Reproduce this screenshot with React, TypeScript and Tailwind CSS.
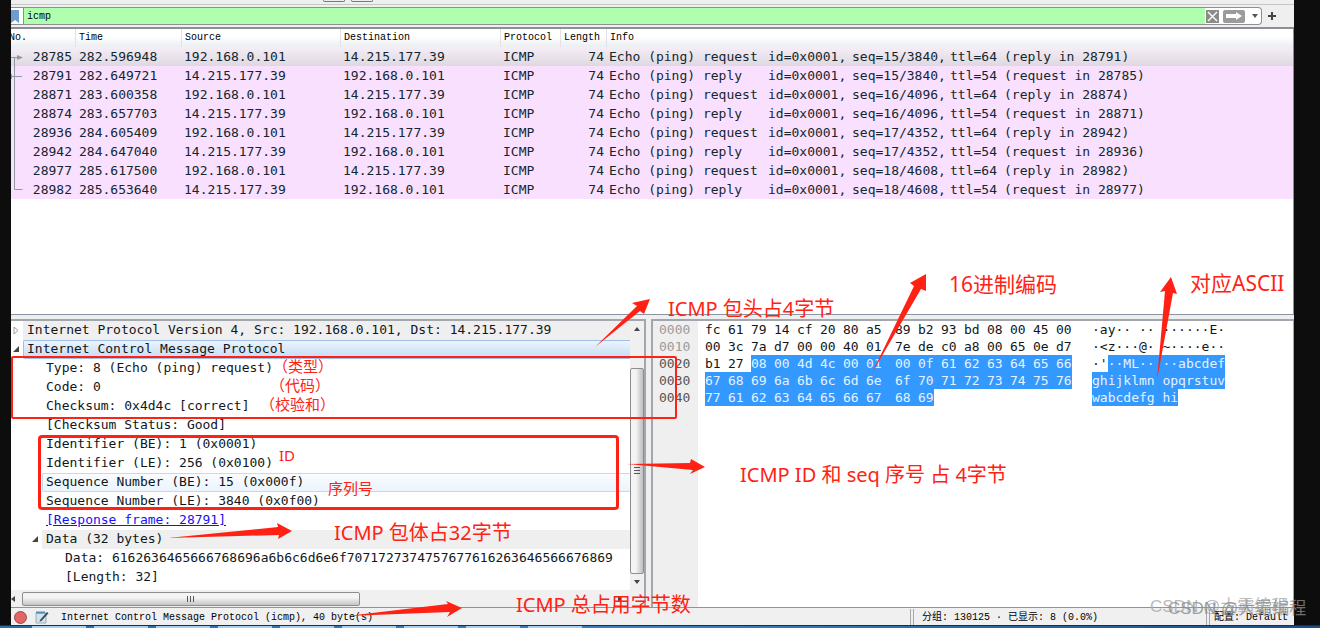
import { ReactNode } from "react";

type Packet = {
    no: number,
    time: string,
    source: string,
    destination: string,
    kind: string,
    seq: string,
    ttl: number,
    peer: string,
};

type HexRow = {
    offset: string,
    bytes: string[],
    ascii: string,
    from: number,
};

const HOST = "192.168.0.101";
const REMOTE = "14.215.177.39";

const packets: Packet[] = [
    { no: 28785, time: "282.596948", source: HOST, destination: REMOTE, kind: "request", seq: "15/3840", ttl: 64, peer: "(reply in 28791)" },
    { no: 28791, time: "282.649721", source: REMOTE, destination: HOST, kind: "reply", seq: "15/3840", ttl: 54, peer: "(request in 28785)" },
    { no: 28871, time: "283.600358", source: HOST, destination: REMOTE, kind: "request", seq: "16/4096", ttl: 64, peer: "(reply in 28874)" },
    { no: 28874, time: "283.657703", source: REMOTE, destination: HOST, kind: "reply", seq: "16/4096", ttl: 54, peer: "(request in 28871)" },
    { no: 28936, time: "284.605409", source: HOST, destination: REMOTE, kind: "request", seq: "17/4352", ttl: 64, peer: "(reply in 28942)" },
    { no: 28942, time: "284.647040", source: REMOTE, destination: HOST, kind: "reply", seq: "17/4352", ttl: 54, peer: "(request in 28936)" },
    { no: 28977, time: "285.617500", source: HOST, destination: REMOTE, kind: "request", seq: "18/4608", ttl: 64, peer: "(reply in 28982)" },
    { no: 28982, time: "285.653640", source: REMOTE, destination: HOST, kind: "reply", seq: "18/4608", ttl: 54, peer: "(request in 28977)" },
];

// from = index of the first byte that belongs to the ICMP layer
const hexRows: HexRow[] = [
    { offset: "0000", bytes: "fc 61 79 14 cf 20 80 a5 89 b2 93 bd 08 00 45 00".split(" "), ascii: "·ay·· ········E·", from: 16 },
    { offset: "0010", bytes: "00 3c 7a d7 00 00 40 01 7e de c0 a8 00 65 0e d7".split(" "), ascii: "·<z···@·~····e··", from: 16 },
    { offset: "0020", bytes: "b1 27 08 00 4d 4c 00 01 00 0f 61 62 63 64 65 66".split(" "), ascii: "·'··ML····abcdef", from: 2 },
    { offset: "0030", bytes: "67 68 69 6a 6b 6c 6d 6e 6f 70 71 72 73 74 75 76".split(" "), ascii: "ghijklmnopqrstuv", from: 0 },
    { offset: "0040", bytes: "77 61 62 63 64 65 66 67 68 69".split(" "), ascii: "wabcdefghi", from: 0 },
];

const arrows = [
    "595,347 637,306 632,303 650,299 644,314 640,311",
    "872,373 914,286 910,283 926,274 926,291 921,289",
    "1157,380 1165,291 1160,292 1171,277 1177,294 1173,293",
    "627,464 690,463 691,459 705,467 690,474 693,470",
    "168,538 278,527 277,523 292,531 278,539 279,535",
    "347,616 448,604 446,601 462,608 447,617 450,612",
];

function FilterBar() {
    return (
        <form className="flex h-[22px] items-center bg-[#efefef] pr-[18px]">
            <div className="flex h-[18px] flex-1 items-stretch rounded-r border border-[#8e8e8e] border-l-0 bg-white">
                <button type="button" aria-label="Bookmarks" className="w-[13px] border-r border-[#8e8e8e] bg-white">
                    <svg width="8" height="14" viewBox="0 0 8 14">
                        <path d="M0 1h8v13l-4-3-4 3z" fill="#6f9bd0" />
                    </svg>
                </button>
                <input
                    aria-label="Display filter"
                    defaultValue="icmp"
                    className="min-w-0 flex-1 bg-[#afffaf] pl-[3px] font-['Liberation_Mono',monospace] text-[10px] text-black outline-none"
                />
                <div className="flex items-center gap-1 pl-px">
                    <button type="button" aria-label="Clear" className="flex size-[13px] items-center justify-center bg-[#8b8b8b]">
                        <svg width="11" height="11" viewBox="0 0 11 11" stroke="#fff" strokeWidth="1.4"><path d="M1 1l9 9M10 1l-9 9" /></svg>
                    </button>
                    <button type="button" aria-label="Apply" className="flex h-[13px] w-[22px] items-center justify-center rounded-xs bg-[#9b9b9b]">
                        <svg width="16" height="8" viewBox="0 0 16 8"><path d="M0 2h10V0l6 4-6 4V6H0z" fill="#fff" /></svg>
                    </button>
                    <button type="button" aria-label="Recent filters" className="flex w-3 justify-center">
                        <svg width="6" height="4" viewBox="0 0 6 4"><path d="M0 0h6L3 4z" fill="#555" /></svg>
                    </button>
                </div>
            </div>
            <button type="button" aria-label="Add filter button" className="ml-[6px]">
                <svg width="8" height="8" viewBox="0 0 8 8" stroke="#444" strokeWidth="2"><path d="M4 0v8M0 4h8" /></svg>
            </button>
        </form>
    );
}

function PacketList() {
    return (
        <section className="relative flex-1 overflow-hidden border-t-2 border-r border-[#8c9096] bg-white">
            <table className="w-full table-fixed border-collapse whitespace-nowrap">
                <colgroup>
                    <col className="w-16" />
                    <col className="w-[106px]" />
                    <col className="w-[159px]" />
                    <col className="w-40" />
                    <col className="w-[60px]" />
                    <col className="w-[46px]" />
                    <col />
                </colgroup>
                <thead>
                    <tr className="h-[18px] bg-linear-to-b from-white from-40% to-[#eceef1] text-left font-['Liberation_Mono',monospace] text-[10px] leading-[18px] text-black *:p-0 *:font-normal">
                        <th><span className="-ml-0.5">No.</span></th>
                        {["Time", "Source", "Destination", "Protocol", "Length", "Info"].map((name) => (
                            <th key={name}><span className="block border-l border-[#e0e2e5] pl-[3px]">{name}</span></th>
                        ))}
                    </tr>
                </thead>
                <tbody className="text-[13px] leading-[19px] text-[#12272e]">
                    {packets.map((p, i) => (
                        <tr key={p.no} className={i === 0 ? "h-[19px] bg-linear-to-b from-[#f6eef6] to-[#ded8e0] *:p-0" : "h-[19px] bg-[#fae0ff] *:p-0"}>
                            <td><span className="block pr-[3px] text-right">{p.no}</span></td>
                            <td><span className="pl-1">{p.time}</span></td>
                            <td><span className="pl-[3px]">{p.source}</span></td>
                            <td><span className="pl-[3px]">{p.destination}</span></td>
                            <td><span className="pl-[3px]">ICMP</span></td>
                            <td><span className="block pr-[2px] text-right">74</span></td>
                            <td>
                                <div className="flex pl-[3px]">
                                    <span className="w-[159px]">Echo (ping) {p.kind}</span>
                                    <span className="w-[84px]">id=0x0001,</span>
                                    <span className="w-[98px]">seq={p.seq},</span>
                                    <span className="w-[54px]">ttl={p.ttl}</span>
                                    <span>{p.peer}</span>
                                </div>
                            </td>
                        </tr>
                    ))}
                </tbody>
            </table>
            {/* conversation marker next to the packet numbers */}
            <svg className="absolute top-[18px] left-0" width="14" height="152" viewBox="0 0 14 152" fill="none" stroke="#8f9aa0">
                <path d="M0 10.5h7M3.500 10.500v132h8M0 29.500h11M.5 27v5" />
                <path d="M6 8l6 2.500-6 2.500z" fill="#8f9aa0" stroke="none" />
            </svg>
        </section>
    );
}

function TreeRow({ children, level, tone, toggle }: { children: ReactNode, level: 0 | 1 | 2, tone?: string, toggle?: "open" | "closed" }) {
    const indent = ["pl-3", "pl-[31px]", "pl-[50px]"][level];
    return (
        <li className={`flex h-[19px] ${indent}`}>
            <div className="relative -ml-3 flex w-3 shrink-0 items-center">
                {toggle === "closed" && (
                    <svg width="7" height="9" viewBox="0 0 7 9" className="ml-0.5"><path d="M1 1v7l4-3.500z" fill="#fff" stroke="#a0a0a0" /></svg>
                )}
                {toggle === "open" && (
                    <svg width="7" height="7" viewBox="0 0 7 7" className="ml-0.5"><path d="M6 0v6H0z" fill="#444" /></svg>
                )}
            </div>
            <div className={`flex-1 ${tone ?? "pl-1 leading-[17px]"}`}>{children}</div>
        </li>
    );
}

function DetailTree() {
    return (
        <section className="flex w-[635px] shrink-0 flex-col border-t-2 border-r-2 border-[#a3a7ad] bg-[#efefef]">
            <div className="flex flex-1">
                <ul className="flex-1 bg-white pb-[3px] text-[13px] whitespace-nowrap text-[#12171a]">
                    <TreeRow level={0} toggle="closed" tone="bg-[#efefef] pl-1 leading-[17px]">Internet Protocol Version 4, Src: 192.168.0.101, Dst: 14.215.177.39</TreeRow>
                    <TreeRow level={0} toggle="open" tone="rounded-l-xs border border-r-0 border-[#9dbfe8] bg-linear-to-b from-[#ecf4fd] to-[#c5dbf7] pl-[3px] leading-[15px]">Internet Control Message Protocol</TreeRow>
                    <TreeRow level={1}>Type: 8 (Echo (ping) request)</TreeRow>
                    <TreeRow level={1}>Code: 0</TreeRow>
                    <TreeRow level={1}>Checksum: 0x4d4c [correct]</TreeRow>
                    <TreeRow level={1}>[Checksum Status: Good]</TreeRow>
                    <TreeRow level={1}>Identifier (BE): 1 (0x0001)</TreeRow>
                    <TreeRow level={1}>Identifier (LE): 256 (0x0100)</TreeRow>
                    <TreeRow level={1} tone="rounded-l-xs border border-r-0 border-[#bcdcf8] bg-linear-to-b from-[#fafcff] to-[#ebf4fd] pl-[3px] leading-[15px]">Sequence Number (BE): 15 (0x000f)</TreeRow>
                    <TreeRow level={1}>Sequence Number (LE): 3840 (0x0f00)</TreeRow>
                    <TreeRow level={1}><a href="#28791" className="text-[#1414f0] underline">[Response frame: 28791]</a></TreeRow>
                    <TreeRow level={1} toggle="open" tone="bg-[#efefef] pl-1 leading-[17px]">Data (32 bytes)</TreeRow>
                    <TreeRow level={2}>Data: 6162636465666768696a6b6c6d6e6f7071727374757677616263646566676869</TreeRow>
                    <TreeRow level={2}>[Length: 32]</TreeRow>
                </ul>
                <div className="flex w-[14px] flex-col items-center bg-[#f0f0f0]">
                    <svg width="6" height="4" viewBox="0 0 6 4" className="my-[6px]"><path d="M0 4h6L3 0z" fill="#444" /></svg>
                    <div className="h-[31px]" />
                    <div className="flex w-full flex-1 items-center justify-center rounded-xs border border-[#8e8e8e] bg-linear-to-r from-[#f4f4f4] from-40% to-[#bdbdc0]">
                        <svg width="6" height="8" viewBox="0 0 6 8" stroke="#555"><path d="M0 .5h6M0 3.500h6M0 6.500h6" /></svg>
                    </div>
                    <svg width="6" height="4" viewBox="0 0 6 4" className="my-[6px]"><path d="M0 0h6L3 4z" fill="#444" /></svg>
                </div>
            </div>
            <div className="flex h-[17px] items-center bg-[#f0f0f0] pr-[22px]">
                <svg width="4" height="6" viewBox="0 0 4 6"><path d="M4 0v6L0 3z" fill="#444" /></svg>
                <div className="ml-[7px] flex h-[14px] w-[338px] items-center justify-center rounded-xs border border-[#8e8e8e] bg-linear-to-b from-[#f4f4f4] from-40% to-[#c4c4c6]">
                    <svg width="8" height="6" viewBox="0 0 8 6" stroke="#555"><path d="M.5 0v6M3.500 0v6M6.500 0v6" /></svg>
                </div>
                <svg width="4" height="6" viewBox="0 0 4 6" className="ml-auto"><path d="M0 0v6l4-3z" fill="#444" /></svg>
            </div>
        </section>
    );
}

function HexDump() {
    return (
        <section className="ml-[5px] flex-1 border-t-2 border-r border-l-2 border-[#a3a7ad] bg-linear-to-r from-[#efefef] from-[45px] to-white to-[45px] text-[13px] whitespace-pre text-[#12171a]">
            {hexRows.map((row) => (
                <div key={row.offset} className="flex h-[17px] leading-[17px]">
                    <span className={row.from < 16 ? "w-[52px] shrink-0 pl-[6px] text-[#555]" : "w-[52px] shrink-0 pl-[6px] text-[#9c9c9c]"}>{row.offset}</span>
                    <div className="flex w-[387px] shrink-0">
                        {row.bytes.map((byte, i) => {
                            const last = i === row.bytes.length - 1;
                            const width = last ? "w-4" : i === 7 ? "w-[29px]" : "w-[23px]";
                            return <span key={i} className={`${width} ${i >= row.from ? "bg-[#3399ff] text-[#e6f2ff]" : ""}`}>{byte}</span>;
                        })}
                    </div>
                    <div className="flex">
                        <span>{row.ascii.slice(0, Math.min(row.from, 8))}</span>
                        <span className={row.from < 16 ? "bg-[#3399ff] text-[#e6f2ff]" : ""}>
                            {row.ascii.slice(Math.min(row.from, 8), 8)} {row.ascii.slice(8)}
                        </span>
                    </div>
                </div>
            ))}
        </section>
    );
}

function StatusBar() {
    return (
        <footer className="flex h-[18px] items-center border-t border-[#8a94a2] bg-[#f0f0f0] pt-px font-['Liberation_Mono','Noto_Sans_CJK_SC',monospace] text-[10px] leading-[14px] whitespace-pre text-black">
            <button type="button" aria-label="Expert information" className="ml-[3px] size-[13px] rounded-full border border-[#9c4a4a] bg-[#e26464]" />
            <button type="button" aria-label="Capture comments" className="ml-2">
                <svg width="14" height="14" viewBox="0 0 14 14">
                    <path d="M1 3h10v10H1z" fill="#cfe2ee" stroke="#9aaeba" />
                    <path d="M1 2.500h9" stroke="#4d8fb8" strokeWidth="2" />
                    <path d="M5 10l7-8 1.500 1.200-7 7.800-2 .6z" fill="#3f4a50" />
                </svg>
            </button>
            <span className="flex-1 pt-0.5 pl-3">Internet Control Message Protocol (icmp), 40 byte(s)</span>
            <span className="flex h-full w-[296px] items-center border-l border-[#a8a8a8]">
                <span className="h-full w-[3px] border-r border-[#a8a8a8]" />
                <span className="pt-0.5 pl-2">分组: 130125 · 已显示: 8 (0.0%)</span>
            </span>
            <span className="flex h-full w-[88px] items-center border-l border-[#a8a8a8]">
                <span className="h-full w-[3px] border-r border-[#a8a8a8]" />
                <span className="pt-0.5 pl-1">配置: Default</span>
            </span>
        </footer>
    );
}

function Annotations() {
    return (
        <div className="pointer-events-none absolute inset-0 overflow-hidden font-['Noto_Sans','Noto_Sans_CJK_SC',sans-serif] text-[15px] leading-5 whitespace-nowrap text-[#ff2214]">
            <div className="absolute top-[356px] left-[11px] h-[63px] w-[666px] rounded-xs border-2 border-current" />
            <div className="absolute top-[435px] left-[38px] h-[75px] w-[581px] rounded-sm border-[3px] border-current" />
            <svg className="absolute inset-0" width="1320" height="628" viewBox="0 0 1320 628" fill="currentColor">
                {arrows.map((points) => <polygon key={points} points={points} />)}
            </svg>
            <p className="absolute top-[356px] left-[273px]">（类型）</p>
            <p className="absolute top-[375px] left-[270px]">（代码）</p>
            <p className="absolute top-[394px] left-[260px]">（校验和）</p>
            <p className="absolute top-[445px] left-[279px]">ID</p>
            <p className="absolute top-[478px] left-[328px]">序列号</p>
            <div className="text-[20px] leading-[30px]">
                <p className="absolute top-[294px] left-[668px]">ICMP 包头占4字节</p>
                <p className="absolute top-[460px] left-[740px]">ICMP ID 和 seq 序号 占 4字节</p>
                <p className="absolute top-[518px] left-[334px]">ICMP 包体占32字节</p>
                <p className="absolute top-[590px] left-[516px]">ICMP 总占用字节数</p>
            </div>
            <div className="text-[21px] leading-[30px]">
                <p className="absolute top-[269px] left-[949px]">16进制编码</p>
                <p className="absolute top-[268px] left-[1190px]">对应ASCII</p>
            </div>
            <div className="font-['Liberation_Sans','Noto_Sans_CJK_SC',sans-serif] text-[17px] leading-6">
                <p className="absolute top-[595px] left-[1150px] text-[#a8a8a8]/80">CSDN @大霸编程</p>
                <p className="absolute top-[597px] left-[1168px] text-[#8a8a8a]/80">CSDN @大霸编程</p>
            </div>
        </div>
    );
}

export default function App() {
    return (
        <div className="relative flex min-h-screen flex-col bg-[#0d0d0d] font-['DejaVu_Sans_Mono',monospace]">
            <main className="mr-[26px] ml-[11px] flex flex-1 flex-col bg-[#efefef]">
                <div className="flex h-[5px] items-start gap-[6px] border-b border-[#c6c6c6] pl-[312px]">
                    <span className="h-0.5 w-[22px] rounded-b border border-t-0 border-[#777]" />
                    <span className="h-0.5 w-[22px] rounded-b border border-t-0 border-[#777]" />
                </div>
                <FilterBar />
                <PacketList />
                <div className="h-[5px] border-t border-[#8a94a2]" />
                <div className="flex">
                    <DetailTree />
                    <HexDump />
                </div>
                <StatusBar />
            </main>
            <div className="flex h-[3px] gap-2 border-t border-[#12324f] bg-linear-to-r from-[#2d6da5] via-[#3a82c4] to-[#1d4f86] pl-8">
                {[1, 2, 3, 4, 5, 6, 7, 8, 9].map((n) => (
                    <span key={n} className="w-[54px] bg-[#a9cdeb]" />
                ))}
            </div>
            <Annotations />
        </div>
    );
}
